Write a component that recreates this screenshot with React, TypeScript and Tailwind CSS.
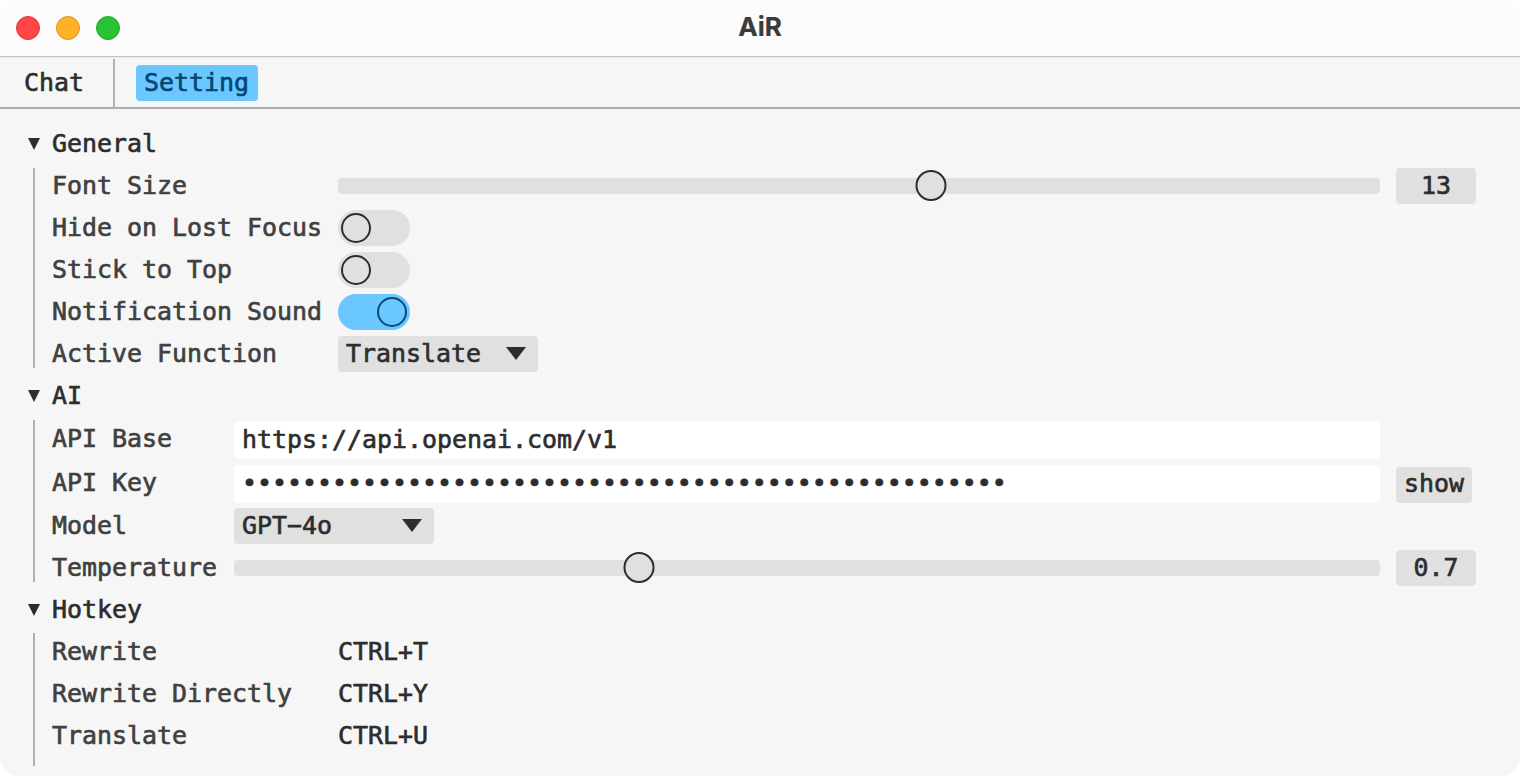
import { useState, type ReactNode } from "react";

const VALUE = "text-[#2d2d2d]";

function Light({ className }: { className: string }) {
  return <span className={`size-6 rounded-full border ${className}`} />;
}

function Triangle({ width, height }: { width: number; height: number }) {
  return (
    <svg width={width} height={height} viewBox={`0 0 ${width} ${height}`} className="block shrink-0">
      <path d={`M0 0H${width}L${width / 2} ${height}Z`} fill="#2d2d2d" />
    </svg>
  );
}

function Text({ children }: { children: ReactNode }) {
  return <span className="whitespace-pre">{children}</span>;
}

function Heading({ children }: { children: ReactNode }) {
  return (
    <div className={`flex h-9 items-center gap-3 pl-7 ${VALUE}`}>
      <Triangle width={12} height={12} />
      <h2 className="-mt-px">
        <Text>{children}</Text>
      </h2>
    </div>
  );
}

function Row({
  label,
  wide,
  className = "h-9",
  labelClass = "-mt-px",
  children,
}: {
  label: string;
  wide?: boolean;
  className?: string;
  labelClass?: string;
  children: ReactNode;
}) {
  return (
    <div className={`flex items-center ${className}`}>
      <span className={`shrink-0 text-[#404040] ${labelClass} ${wide ? "w-[286px]" : "w-[182px]"}`}>
        <Text>{label}</Text>
      </span>
      {children}
    </div>
  );
}

function Slider({ percent, value }: { percent: number; value: string }) {
  return (
    <div className="flex flex-1 items-center gap-4 pr-11">
      <div className="relative h-4 flex-1 rounded bg-[#e0e0e0]">
        <span
          className="absolute -top-2 size-[31px] -translate-x-1/2 rounded-full border-2 border-[#2d2d2d] bg-[#e0e0e0]"
          style={{ left: `${percent}%` }}
        />
      </div>
      <span className={`flex h-9 w-20 items-center justify-center rounded bg-[#e0e0e0] pb-px ${VALUE}`}>{value}</span>
    </div>
  );
}

function Toggle({ initial = false }: { initial?: boolean }) {
  const [on, setOn] = useState(initial);
  return (
    <button
      onClick={() => setOn(!on)}
      className={`flex h-9 w-[72px] items-center rounded-full px-[3px] ${on ? "justify-end bg-[#6ac7ff]" : "justify-start bg-[#e0e0e0]"}`}
    >
      <span className={`size-[30px] rounded-full border-2 ${on ? "border-[#0b4a75]" : "border-[#2d2d2d]"}`} />
    </button>
  );
}

function Select({ value }: { value: string }) {
  return (
    <button className={`flex h-9 w-[200px] items-center justify-between rounded bg-[#e0e0e0] pr-3 pb-px pl-2 ${VALUE}`}>
      <Text>{value}</Text>
      <Triangle width={20} height={13} />
    </button>
  );
}

export default function App() {
  return (
    <div className="h-[776px] w-[1520px] overflow-hidden bg-white">
      <div className="flex h-full flex-col overflow-hidden rounded-[20px] bg-[#f6f6f6] font-['DejaVu_Sans_Mono',monospace] text-[24.92px] leading-9 [-webkit-text-stroke:0.65px_currentColor]">
        <header className="grid h-[57px] shrink-0 grid-cols-[1fr_auto_1fr] items-center border-b border-[#c4c4c4] bg-[#fcfcfc] px-4">
          <div className="flex gap-4">
            <Light className="border-[#e0383b] bg-[#ff4747]" />
            <Light className="border-[#d99723] bg-[#ffb128]" />
            <Light className="border-[#20a62a] bg-[#29c232]" />
          </div>
          <h1 className="-mt-0.5 font-[Inter,sans-serif] text-[26px] font-bold text-[#3b3b3b] [-webkit-text-stroke:0.2px_currentColor]">AiR</h1>
        </header>
        <nav className="flex h-[52px] shrink-0 border-t border-b-2 border-t-[#e8e8e8] border-b-[#adadad] pt-px">
          <button className={`w-[113px] pb-px pl-6 text-left ${VALUE}`}>Chat</button>
          <span className="w-0.5 bg-[#b0b0b0]" />
          <button className="mt-1.5 ml-[21px] flex h-9 w-[122px] items-center rounded bg-[#6ac7ff] pb-px pl-2 text-[#064672]">
            Setting
          </button>
        </nav>

        <main className="flex flex-col pt-[17px]">
          <Heading>General</Heading>
          <section className="mt-1.5 flex">
            <span className="ml-[33px] h-[200px] w-0.5 shrink-0 bg-[#b0b0b0]" />
            <div className="ml-[17px] flex flex-1 flex-col gap-1.5">
              <Row label="Font Size" wide>
                <Slider percent={56.95} value="13" />
              </Row>
              <Row label="Hide on Lost Focus" wide>
                <Toggle />
              </Row>
              <Row label="Stick to Top" wide>
                <Toggle />
              </Row>
              <Row label="Notification Sound" wide>
                <Toggle initial />
              </Row>
              <Row label="Active Function" wide>
                <Select value="Translate" />
              </Row>
            </div>
          </section>

          <div className="mt-1.5">
            <Heading>AI</Heading>
          </div>
          <section className="mt-1.5 flex h-[162px]">
            <span className="ml-[33px] w-0.5 shrink-0 bg-[#b0b0b0]" />
            <div className="ml-[17px] flex flex-1 flex-col pt-px">
              <Row label="API Base" className="h-[38px]" labelClass="-mt-[3px]">
                <span className={`mr-[140px] flex h-[38px] flex-1 items-center rounded bg-white pl-2 ${VALUE}`}>
                  <Text>https://api.openai.com/v1</Text>
                </span>
              </Row>
              <Row label="API Key" className="mt-1.5 h-[38px]" labelClass="-mt-[3px]">
                <span className={`mr-4 flex h-[38px] flex-1 items-center rounded bg-white pl-2 ${VALUE}`}>
                  <Text>{"•".repeat(51)}</Text>
                </span>
                <button className={`mt-px mr-12 flex h-9 w-[76px] items-center justify-center rounded bg-[#e0e0e0] pb-px ${VALUE}`}>
                  show
                </button>
              </Row>
              <Row label="Model" className="mt-[5px] h-9">
                <Select value="GPT−4o" />
              </Row>
              <Row label="Temperature" className="mt-1.5 h-9" labelClass="mt-0">
                <Slider percent={35.35} value="0.7" />
              </Row>
            </div>
          </section>

          <div className="mt-2.5">
            <Heading>Hotkey</Heading>
          </div>
          <section className="mt-[5px] flex">
            <span className="ml-[33px] h-[133px] w-0.5 shrink-0 bg-[#b0b0b0]" />
            <div className={`ml-[17px] flex flex-1 flex-col gap-1.5 pt-px ${VALUE}`}>
              <Row label="Rewrite" wide>
                <span className="-mt-px">CTRL+T</span>
              </Row>
              <Row label="Rewrite Directly" wide>
                <span className="-mt-px">CTRL+Y</span>
              </Row>
              <Row label="Translate" wide>
                <span className="-mt-px">CTRL+U</span>
              </Row>
            </div>
          </section>
        </main>
      </div>
    </div>
  );
}
